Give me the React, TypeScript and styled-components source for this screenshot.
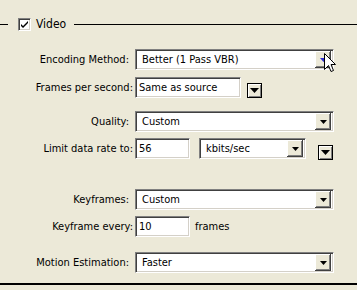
import React from "react";
import styled, { createGlobalStyle } from "styled-components";

const Global = createGlobalStyle`
  html, body { margin: 0; padding: 0; background: #ECE9D8; }
`;

const Panel = styled.div`
  position: relative;
  width: 357px;
  height: 290px;
  background: #ECE9D8;
  overflow: hidden;
  display: flex;
  flex-direction: column;
  font-family: "Liberation Sans Narrow", "DejaVu Sans Condensed", "Liberation Sans", Arial, sans-serif;
  font-size: 11px;
  color: #000;
`;

const Header = styled.div`
  display: flex;
  align-items: center;
  height: 13px;
  margin-top: 18px;
`;

const Rule = styled.div<{ $w?: number }>`
  height: 1px;
  background: #000;
  ${(p) => (p.$w ? `width:${p.$w}px;` : `flex: 1;`)}
`;

const CheckBox = styled.div`
  box-sizing: border-box;
  width: 13px;
  height: 13px;
  margin-left: 10px;
  background: #fff;
  border: 1px solid;
  border-color: #808080 #fff #fff #808080;
  box-shadow: inset 1px 1px #404040, inset -1px -1px #D4D0C8;
  display: flex;
  align-items: center;
  justify-content: center;
`;

const HeaderLabel = styled.span`
  margin-left: 5px;
  margin-right: 8px;
  line-height: 13px;
  font-size: 12px;
`;

const Form = styled.div`
  display: flex;
  flex-direction: column;
`;

const Row = styled.div<{ $top: number }>`
  display: grid;
  grid-template-columns: 135px auto;
  align-items: center;
  margin-top: ${(p) => p.$top}px;
  height: 21px;
`;

const Label = styled.label<{ $tight?: boolean }>`
  text-align: right;
  white-space: nowrap;
  padding-right: ${(p) => (p.$tight ? 2 : 6)}px;
  line-height: 21px;
`;

const Controls = styled.div`
  display: flex;
  align-items: flex-end;
  height: 21px;
`;

const sunken = `
  box-sizing: border-box;
  background: #fff;
  border: 1px solid;
  border-color: #808080 #fff #fff #808080;
  box-shadow: inset 1px 1px #404040, inset -1px -1px #D4D0C8;
`;

const Combo = styled.div<{ $w: number; $ml?: number }>`
  ${sunken}
  width: ${(p) => p.$w}px;
  height: 21px;
  margin-left: ${(p) => p.$ml ?? 0}px;
  display: flex;
  align-items: center;
  padding: 2px;
`;

const ComboText = styled.span`
  flex: 1;
  padding-left: 4px;
  white-space: nowrap;
  overflow: hidden;
`;

const ComboButton = styled.div`
  box-sizing: border-box;
  width: 16px;
  height: 17px;
  background: #ECE9D8;
  box-shadow: inset -1px -1px #404040, inset 1px 1px #fff, inset -2px -2px #808080;
  display: flex;
  align-items: center;
  justify-content: center;
`;

const TextBox = styled.div<{ $w: number }>`
  ${sunken}
  width: ${(p) => p.$w}px;
  height: 21px;
  display: flex;
  align-items: center;
  padding-left: 3px;
  white-space: nowrap;
`;

const LooseButton = styled.div<{ $ml: number; $mb?: number }>`
  box-sizing: border-box;
  width: 15px;
  height: 15px;
  margin-left: ${(p) => p.$ml}px;
  margin-bottom: ${(p) => p.$mb ?? 0}px;
  background: #ECE9D8;
  border: 1px solid #000;
  box-shadow: inset 1px 1px #fff, inset -1px -1px #808080;
  display: flex;
  align-items: center;
  justify-content: center;
`;

const Suffix = styled.span`
  margin-left: 5px;
  align-self: center;
`;

const BottomRule = styled.div`
  position: absolute;
  left: 0;
  right: 0;
  top: 283px;
  height: 2px;
  background: #000;
`;

const Cursor = styled.svg`
  position: absolute;
  left: 324px;
  top: 53px;
`;

const Arrow = ({ color = "#000", w = 7 }: { color?: string; w?: number }) => (
  <svg width={w} height={Math.ceil(w / 2)} viewBox={`0 0 ${w} ${Math.ceil(w / 2)}`}>
    <polygon points={`0,0 ${w},0 ${w / 2},${Math.ceil(w / 2)}`} fill={color} />
  </svg>
);

const Select = ({ w, ml, text, arrow }: { w: number; ml?: number; text: string; arrow?: string }) => (
  <Combo $w={w} $ml={ml}>
    <ComboText>{text}</ComboText>
    <ComboButton>
      <Arrow color={arrow} />
    </ComboButton>
  </Combo>
);

export default function App() {
  return (
    <Panel>
      <Global />
      <Header>
        <Rule $w={8} />
        <CheckBox>
          <svg width="9" height="9" viewBox="0 0 9 9">
            <path d="M1 4 L3 6 L8 1 L8 3 L3 8 L1 6 Z" fill="#000" />
          </svg>
        </CheckBox>
        <HeaderLabel>Video</HeaderLabel>
        <Rule />
      </Header>
      <Form>
        <Row $top={18}>
          <Label>Encoding Method:</Label>
          <Controls>
            <Select w={199} text="Better (1 Pass VBR)" arrow="#3030d0" />
          </Controls>
        </Row>
        <Row $top={7}>
          <Label $tight>Frames per second:</Label>
          <Controls>
            <TextBox $w={106}>Same as source</TextBox>
            <LooseButton $ml={6}>
              <Arrow w={9} />
            </LooseButton>
          </Controls>
        </Row>
        <Row $top={13}>
          <Label>Quality:</Label>
          <Controls>
            <Select w={199} text="Custom" />
          </Controls>
        </Row>
        <Row $top={6}>
          <Label $tight>Limit data rate to:</Label>
          <Controls>
            <TextBox $w={55}>56</TextBox>
            <Select w={107} ml={9} text="kbits/sec" />
            <LooseButton $ml={12} $mb={-1}>
              <Arrow w={9} />
            </LooseButton>
          </Controls>
        </Row>
        <Row $top={30}>
          <Label>Keyframes:</Label>
          <Controls>
            <Select w={199} text="Custom" />
          </Controls>
        </Row>
        <Row $top={6}>
          <Label $tight>Keyframe every:</Label>
          <Controls>
            <TextBox $w={55}>10</TextBox>
            <Suffix>frames</Suffix>
          </Controls>
        </Row>
        <Row $top={15}>
          <Label>Motion Estimation:</Label>
          <Controls>
            <Select w={199} text="Faster" />
          </Controls>
        </Row>
      </Form>
      <BottomRule />
      <Cursor width="12" height="20" viewBox="0 0 12 20">
        <path
          d="M0.5 0.5 L0.5 16.5 L4.5 12.5 L7 18.5 L9.5 17.5 L7 11.5 L11.5 11.5 Z"
          fill="#fff"
          stroke="#000"
          strokeWidth="1"
        />
      </Cursor>
    </Panel>
  );
}
